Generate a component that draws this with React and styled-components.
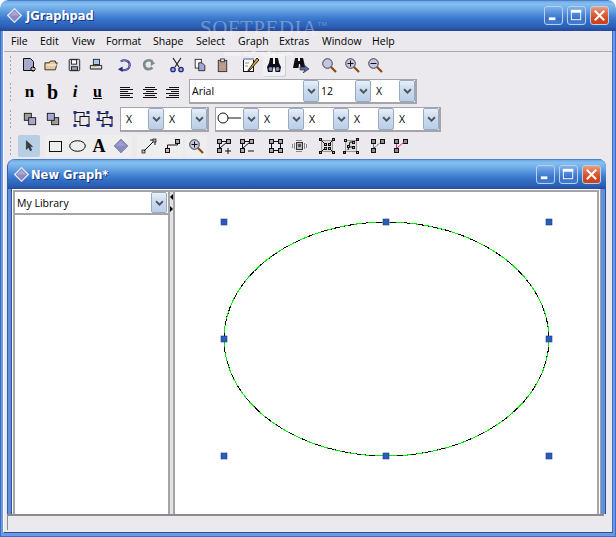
import React from "react";
import styled, { createGlobalStyle } from "styled-components";

const Global = createGlobalStyle`
  html, body { margin: 0; padding: 0; background: #fff; }
  body { width: 616px; height: 537px; overflow: hidden; font-family: "Open Sans", "Liberation Sans", sans-serif; }
  #root { width: 616px; height: 537px; }
`;

const BLUE = "linear-gradient(180deg,#2b55ad 0,#6fa9e6 1px,#86bfee 4px,#67a4e4 10px,#4683d4 16px,#3270c4 21px,#2b5eb4 27px,#2750a6 29px,#27499c 30px)";

const Shell = styled.div`
  position: relative; width: 616px; height: 537px; box-sizing: border-box;
  border-radius: 8px 8px 0 0; background: #fff; overflow: hidden;
  display: flex; flex-direction: column;
`;
const TitleBar = styled.div`
  flex: none; display: flex; align-items: center;
  height: ${p => p.$h}px; background: ${BLUE}; box-sizing: border-box;
  padding: ${p => p.$pad};
  margin: ${p => p.$bleed ? "0 -5px 0 -4px" : "0"};
  border-radius: 8px 8px 0 0;
`;
const TitleText = styled.span`
  font: bold ${p => p.$size}px "DejaVu Sans", sans-serif; color: #fff;
  text-shadow: 1px 1px 0 #16357f; margin-left: ${p => p.$ml}px; flex: 1;
`;
const WinBtn = styled.div`
  width: 19px; height: 19px; box-sizing: border-box; border: 1px solid #b9d0ef; border-radius: 3px;
  margin-left: 4px; display: flex; align-items: center; justify-content: center;
  background: ${p => p.$close
    ? "linear-gradient(180deg,#e9a083 0,#dd6a43 35%,#d44a22 65%,#cf3f18 100%)"
    : "linear-gradient(180deg,#7fb2ea 0,#4f8ad8 40%,#3a70c8 70%,#3f7fd2 100%)"};
`;
const Frame = styled.div`
  flex: 1; display: flex; flex-direction: column; min-height: 0;
  border-style: solid; border-color: #3b6bc6; border-width: 0 1px 1px 1px;
  background: #6b9ae0;
  padding: 0 2px 3px 2px;
`;
const Client = styled.div`
  flex: 1; min-height: 0; display: flex; flex-direction: column; background: #ebe9ed;
  border-left: 1px solid #fff; border-right: 1px solid #3b6bc6; border-bottom: 1px solid #2a4f9e;
`;
const MenuBar = styled.div`
  flex: none; height: 20px; display: flex; align-items: center; padding-left: 7px;
  border-bottom: 1px solid #a9a9ad;
`;
const MenuItem = styled.span`
  font-size: 10.5px; line-height: 12px; color: #000; width: ${p => p.$w}px; white-space: nowrap;
`;
const Toolbar = styled.div`
  flex: none; height: ${p => p.$h}px; display: flex; align-items: center; padding-left: 5px;
`;
const Grip = styled.div`
  width: 3px; height: ${p => p.$h}px; flex: none; margin-right: 6px;
  background-image: radial-gradient(circle, #a4a4ac 0.8px, transparent 1px);
  background-size: 3px 4px;
`;
const Group = styled.div`
  display: flex; align-items: center; margin-left: ${p => p.$ml || 0}px;
  background: ${p => p.$shade ? "#eeeeee" : "transparent"}; height: ${p => p.$shade ? "22px" : "auto"};
`;
const Tool = styled.div`
  width: ${p => p.$w || 22}px; height: 22px; flex: none; display: flex; align-items: center; justify-content: center;
  box-sizing: border-box; border-radius: 2px;
  background: ${p => p.$on ? "#b7cfe5" : p.$hover ? "#f1f0f2" : "transparent"};
  box-shadow: ${p => p.$hover ? "1px 1px 0 #cfcfd4" : "none"};
  margin-left: ${p => p.$ml || 0}px;
`;
const Glyph = styled.span`
  font: ${p => p.$italic ? "italic " : ""}bold ${p => p.$size}px/1 "Liberation Serif", serif; color: #000;
  text-decoration: ${p => p.$under ? "underline" : "none"};
`;
const ComboGroup = styled.div`
  display: flex; margin-left: ${p => p.$ml || 0}px; box-sizing: border-box;
  border: solid #a3a5ab; border-width: 1px 2px 2px 1px; background: #fff; height: 25px;
`;
const Combo = styled.div`
  width: ${p => p.$w}px; flex: none; background: #fff; display: flex; align-items: center;
  justify-content: space-between; box-sizing: border-box; margin-left: ${p => p.$ml || 0}px;
`;
const ComboText = styled.span`
  font-size: 10.5px; color: #000; padding-left: ${p => p.$pl || 5}px; white-space: nowrap;
`;
const Drop = styled.div`
  width: 16px; height: 100%; flex: none; box-sizing: border-box; border: 1px solid #98a9c2; border-radius: 2px;
  background: linear-gradient(180deg,#e9eff9 0,#d0deef 35%,#b9cfe7 100%);
  display: flex; align-items: center; justify-content: center;
`;
const Inner = styled.div`
  flex: 1; min-height: 0; display: flex; flex-direction: column; margin: 0 6px 0 3px;
`;
const InnerFrame = styled.div`
  flex: 1; min-height: 0; display: flex; flex-direction: column;
  background: #5f90da; border-left: 1px solid #2f5fb8; border-right: 1px solid #2a4f9e; padding: 0 4px;
  border-radius: 8px 8px 0 0;
`;
const InnerClient = styled.div`
  flex: 1; min-height: 0; display: flex; background: #fff; padding: 1px 1px 0 1px;
  border-left: 1px solid #2a4f9e; border-right: 1px solid #a5a5a8; margin-left: -1px;
`;
const Split = styled.div`
  flex: 1; min-height: 0; display: flex; border: 2px solid #a5a5a8; border-bottom: 0; background: #fff;
`;
const Library = styled.div`
  width: 153px; flex: none; display: flex; flex-direction: column; background: #fff;
`;
const LibraryCombo = styled.div`
  height: 23px; flex: none; display: flex; align-items: center; justify-content: space-between; box-sizing: border-box;
  border-bottom: 2px solid #a5a5a8; padding: 0 1px 0 0;
`;
const Divider = styled.div`
  position: relative; width: 7px; flex: none; box-sizing: border-box; background: #e2e1e6;
  border-left: 2px solid #a5a5a8; border-right: 2px solid #a5a5a8;
`;
const Arrow = styled.i`
  position: absolute; left: 0; top: ${p => p.$top}px; width: 0; height: 0;
  border-top: 3px solid transparent; border-bottom: 3px solid transparent;
  ${p => p.$left ? "border-right: 3px solid #000;" : "border-left: 3px solid #000;"}
`;
const Canvas = styled.div`
  flex: 1; position: relative; background: #fff; min-width: 0;
`;
const CanvasArt = styled.svg`
  position: absolute; left: 0; top: 0; width: 422px; height: 321px;
`;
const Status = styled.div`
  flex: none; height: 16px; box-sizing: border-box; margin: 0 8px 2px 3px; background: #ebe9ed;
  border-top: 2px solid #8c8c8f; border-left: 1px solid #8c8c8f;
`;
const Watermark = styled.div`
  position: absolute; left: 200px; top: 21px; white-space: nowrap;
  font: 21px/14px "Liberation Serif", serif; letter-spacing: 0.5px;
  color: rgba(255,255,255,.32); pointer-events: none;
`;
const WatermarkTM = styled.span`
  font: 6px/6px "Liberation Sans", sans-serif; vertical-align: top;
`;
const WatermarkSub = styled.div`
  position: absolute; left: 224px; top: 49px; font: 8px/9px "Liberation Sans", sans-serif;
  color: rgba(255,255,255,.8); pointer-events: none;
`;

const Svg = ({ children, s = 16, w, h, vb }) => (
  <svg width={w || s} height={h || s} viewBox={vb || "0 0 16 16"} fill="none">{children}</svg>
);
const Chevron = () => (
  <Svg w={9} h={6} vb="0 0 10 7"><path d="M1 1.5 5 5.5 9 1.5" stroke="#4d5666" strokeWidth="2.2" /></Svg>
);
const AppDiamond = () => (
  <Svg s={15} vb="0 0 15 15"><path d="M7.5.7 14.3 7.5 7.5 14.3.7 7.5Z" fill="#8b8bc0" stroke="#e8ebf8" strokeWidth="1.2" /><path d="M7.5 3 12 7.5H3Z" fill="#a9a9d4" /></Svg>
);
const Diamond = () => (
  <Svg><path d="M8 1 15 8 8 15 1 8Z" fill="#8a8ac2" stroke="#8f8fa8" /><path d="M8 3 13 8H3Z" fill="#9d9dd0" /></Svg>
);
const Min = () => <Svg s={15}><rect x="3" y="10" width="7" height="3" fill="#fff" /></Svg>;
const Max = () => <Svg s={15}><rect x="2.5" y="2.5" width="10" height="10" stroke="#fff" /><rect x="2" y="2" width="11" height="3" fill="#fff" /></Svg>;
const Close = () => <Svg s={15}><path d="M3 3 13 13M13 3 3 13" stroke="#fff" strokeWidth="2.2" /></Svg>;

const Lens = ({ children }) => (
  <Svg>
    <path d="M10 10 15 15" stroke="#8a4a12" strokeWidth="2.2" />
    <circle cx="6.5" cy="6.5" r="4.8" fill="#c6c6dc" stroke="#3b3b50" />
    {children}
  </Svg>
);
const Binoculars = () => (
  <>
    <path d="M4 1h3v6h2V1h3l1 5 2 4-1 5H9.5L8.5 10h-1l-1 5H2l-1-5 2-4Z" fill="#0d0d14" />
    <circle cx="4.5" cy="12" r="2" fill="#7f8fc0" />
    <circle cx="11.5" cy="12" r="2" fill="#7f8fc0" />
  </>
);
const Node = ({ x, y, s = 4, f = "#a8a8a8" }) => <rect x={x + .5} y={y + .5} width={s} height={s} fill={f} stroke="#111" />;
const Handle = ({ x, y }) => <rect x={x} y={y} width="3" height="3" fill="#1f2f8c" />;

const I = {
  new: <Svg><path d="M2.5 1.5h7l3 3v9h-10Z" fill="#a9a9cc" stroke="#111" /><path d="M12 9v6M9 12h6M10 10l4 4M14 10l-4 4" stroke="#111" /><path d="M12 11v2M11 12h2" stroke="#fff" /></Svg>,
  open: <Svg w={15} h={14} vb="0 0 17 16"><path d="M1 5.5h5l1-2h6v2h2l-2 8H1Z" fill="#e8c99a" stroke="#222" /><path d="M3 8h12" stroke="#fff" /></Svg>,
  save: <Svg s={14}><rect x="2.5" y="1.5" width="12" height="13" rx="1" fill="#dcdce6" stroke="#111" /><rect x="5" y="2" width="6" height="5" fill="#fff" stroke="#111" /><rect x="5" y="10" width="7" height="4" fill="#9c9cc0" stroke="#111" /></Svg>,
  print: <Svg s={14}><rect x="5" y="1.5" width="7" height="6" fill="#a8c8e8" stroke="#222" /><path d="M1.5 8.5h13v4h-13Z" fill="#dedee6" stroke="#111" /><path d="M1.5 12.5h13v1h-13Z" fill="#777" /><rect x="4" y="9" width="5" height="1" fill="#e8a040" /></Svg>,
  undo: <Svg s={15}><path d="M4 3.5C8 1 14 3 13.5 8S7 14 4 12" stroke="#2a2a7c" strokeWidth="2.2" /><path d="M4 3.5C8 1 14 3 13.5 8S7 14 4 12" stroke="#9aa0dc" strokeWidth=".9" /><path d="M1 12 6 9v6Z" fill="#2a2a7c" /></Svg>,
  redo: <Svg s={14}><path d="M12 4C8 1 2 3 2.5 8S8 14 12 11" stroke="#7f8a8a" strokeWidth="3" /><path d="M15 6 10 2v7Z" fill="#7f8a8a" /></Svg>,
  cut: <Svg><path d="M4 1 10 10M12 1 6 10" stroke="#222" strokeWidth="1.2" /><circle cx="4" cy="12.5" r="2.2" fill="#aab" stroke="#1f2a8c" strokeWidth="1.3" /><circle cx="12" cy="12.5" r="2.2" fill="#aab" stroke="#1f2a8c" strokeWidth="1.3" /></Svg>,
  copy: <Svg s={14}><rect x="2.5" y="1.5" width="7" height="10" fill="#fff" stroke="#222" /><path d="M6.5 5.5h4l3 3v6h-7Z" fill="#9fa6d6" stroke="#222" /></Svg>,
  paste: <Svg s={15}><rect x="3.5" y="2.5" width="9" height="12" fill="#bb9b90" stroke="#333" /><rect x="6" y="1" width="4" height="3" fill="#eee" stroke="#333" /></Svg>,
  edit: <Svg w={18} h={16} vb="0 0 18 16"><rect x="1.5" y="1.5" width="10" height="13" fill="#fff" stroke="#111" /><rect x="1" y="1" width="11" height="2" fill="#a0a0c8" /><path d="M15 1 7 12l-1 2 2-1 9-10Z" fill="#d8a838" stroke="#222" /><path d="M3 6h4M3 9h3" stroke="#888" /></Svg>,
  find: <Svg><Binoculars /></Svg>,
  replace: <Svg w={18} h={16} vb="0 0 18 16"><path d="M3 1h3v3h2V1h3l1 4 1 5H8.5L8 7H7l-.5 4H1l1-5Z" fill="#0d0d14" /><path d="M8 10h5l-2-3 6 5-6 4 2-3H8Z" fill="#5d68ad" stroke="#222" strokeWidth=".6" /></Svg>,
  zoom: <Lens />,
  zoomin: <Lens><path d="M3.5 6.5h6M6.5 3.5v6" stroke="#111" /></Lens>,
  zoomout: <Lens><path d="M3.5 6.5h6" stroke="#111" /></Lens>,
  left: <Svg><path d="M2 3.5h10M2 5.5h13M2 7.5h8M2 9.5h13M2 11.5h10M2 13.5h13" stroke="#111" /></Svg>,
  center: <Svg><path d="M3 3.5h10M1 5.5h14M4 7.5h8M1 9.5h14M3 11.5h10M1 13.5h14" stroke="#111" /></Svg>,
  right: <Svg><path d="M4 3.5h10M1 5.5h13M6 7.5h8M1 9.5h13M4 11.5h10M1 13.5h13" stroke="#111" /></Svg>,
  front: <Svg s={14}><rect x="1.5" y="1.5" width="8" height="8" fill="#9d9d9d" stroke="#111" /><rect x="6.5" y="6.5" width="8" height="8" fill="#a8a8cc" stroke="#111" /></Svg>,
  back: <Svg s={14}><rect x="6.5" y="6.5" width="8" height="8" fill="#9d9d9d" stroke="#111" /><rect x="1.5" y="1.5" width="8" height="8" fill="#a8a8cc" stroke="#111" /></Svg>,
  group: <Svg w={17}><rect x="1.5" y="1.5" width="9" height="9" stroke="#111" /><rect x="6.5" y="5.5" width="9" height="9" fill="#ebe9ed" stroke="#111" /><Handle x={0} y={0} /><Handle x={13} y={0} /><Handle x={0} y={13} /><Handle x={13} y={13} /></Svg>,
  ungroup: <Svg w={17}><rect x="2.5" y="2.5" width="8" height="7" stroke="#111" /><rect x="6.5" y="6.5" width="9" height="7" fill="#ebe9ed" stroke="#111" /><Handle x={1} y={0} /><Handle x={9} y={0} /><Handle x={0} y={7} /><Handle x={13} y={5} /><Handle x={5} y={13} /><Handle x={13} y={13} /></Svg>,
  arrow: <Svg s={14}><path d="M5 2v10l2.5-2.5 2 4 1.6-.8-2-4H12Z" fill="#3a3f4a" stroke="#111" strokeWidth=".6" /></Svg>,
  rect: <Svg w={13} h={11} vb="0 0 13 11"><rect x=".5" y=".5" width="12" height="10" stroke="#111" /></Svg>,
  ellipse: <Svg w={17} h={12} vb="0 0 17 12"><ellipse cx="8.5" cy="6" rx="7.8" ry="5.3" stroke="#111" /></Svg>,
  connect: <Svg><rect x="1" y="12" width="3" height="3" fill="#d8b0b8" stroke="#111" strokeWidth=".7" /><path d="M3 13 13 3M9 2h5v5" stroke="#111" /><rect x="12" y="1" width="3" height="3" fill="#aaa" stroke="#111" strokeWidth=".7" /></Svg>,
  route: <Svg><Node x={1} y={10} f="#d8b0b8" /><path d="M3.5 10V7h10V4" stroke="#111" /><Node x={11} y={1} /></Svg>,
  gplus: <Svg><Node x={1} y={1} /><Node x={10} y={1} /><Node x={1} y={10} /><path d="M4 10 11 4" stroke="#111" /><path d="M3.5 6v4M6 3.5h4" stroke="#111" /><path d="M9 13h6M12 10v6" stroke="#111" /></Svg>,
  gminus: <Svg><Node x={1} y={1} /><Node x={10} y={1} /><Node x={1} y={10} /><path d="M4 10 11 4M3.5 6v4M6 3.5h4M9 13h6" stroke="#111" /></Svg>,
  square: <Svg><Node x={1} y={1} /><Node x={10} y={1} /><Node x={1} y={10} /><Node x={10} y={10} /><path d="M3.5 6v4M12.5 6v4M6 3.5h4M6 12.5h4" stroke="#111" /></Svg>,
  embed: <Svg><rect x="5.5" y="4.5" width="6" height="7" fill="#bbb" stroke="#333" /><rect x="7" y="6" width="3" height="3" fill="#555" /><path d="M3.5 5v6M13.5 5v6M1.5 6v4M15.5 6v4M5 2.5h6M5 13.5h6" stroke="#888" /></Svg>,
  layout1: <Svg><rect x="2.5" y="2.5" width="11" height="11" fill="#dcdcdc" stroke="#999" /><path d="M2 2 6 6M14 2 10 6M2 14 6 10M14 14 10 10" stroke="#111" /><Node x={0} y={0} s={2} /><Node x={13} y={0} s={2} /><Node x={0} y={13} s={2} /><Node x={13} y={13} s={2} /><Node x={5} y={5} s={2} /><Node x={9} y={5} s={2} /><Node x={5} y={9} s={2} /><Node x={9} y={9} s={2} /></Svg>,
  layout2: <Svg><rect x="2.5" y="2.5" width="11" height="11" fill="#dcdcdc" stroke="#999" /><Node x={0} y={13} s={2} f="#d8306a" /><Node x={13} y={0} s={2} f="#d8306a" /><Node x={1} y={1} s={2} /><Node x={13} y={13} s={2} /><path d="M5 12 7 4h4M7 9h4" stroke="#111" /><Node x={4} y={7} s={2} /><Node x={9} y={3} s={2} /><Node x={9} y={8} s={2} /></Svg>,
  tree1: <Svg><Node x={1} y={1} f="#8c8c8c" /><Node x={10} y={1} f="#8c8c8c" /><Node x={1} y={10} f="#8c8c8c" /><path d="M4 10 11 4" stroke="#111" strokeDasharray="1 1" /><path d="M3.5 6v4" stroke="#777" /></Svg>,
  tree2: <Svg><Node x={1} y={1} f="#8c8c8c" /><Node x={10} y={1} f="#8c8c8c" /><Node x={1} y={10} f="#8c8c8c" /><path d="M4 10 11 4M3.5 6v4" stroke="#d83070" /></Svg>,
};

const menus = [["File", 29], ["Edit", 32], ["View", 34], ["Format", 47], ["Shape", 43], ["Select", 42], ["Graph", 41], ["Extras", 43], ["Window", 50], ["Help", 30]];
const handles = [[49, 30], [211, 30], [374, 30], [49, 147], [374, 147], [49, 264], [211, 264], [374, 264]];

const ComboBox = ({ w, text, ml, pl }) => (
  <Combo $w={w} $ml={ml}>
    <ComboText $pl={pl}>{text}</ComboText>
    <Drop><Chevron /></Drop>
  </Combo>
);

export default function App() {
  return (
    <Shell>
      <Global />
      <TitleBar $h={31} $pad="0 7px 0 7px">
        <AppDiamond />
        <TitleText $size={11.5} $ml={4}>JGraphpad</TitleText>
        <WinBtn><Min /></WinBtn>
        <WinBtn><Max /></WinBtn>
        <WinBtn $close><Close /></WinBtn>
      </TitleBar>
      <Frame>
        <Client>
          <MenuBar>
            {menus.map(([m, w]) => <MenuItem key={m} $w={w}>{m}</MenuItem>)}
          </MenuBar>
          <Toolbar $h={26}>
            <Grip $h={20} />
            <Group>
              <Tool>{I.new}</Tool><Tool>{I.open}</Tool><Tool $w={23}>{I.save}</Tool><Tool>{I.print}</Tool>
            </Group>
            <Group $ml={5}><Tool $w={24}>{I.undo}</Tool><Tool $w={26}>{I.redo}</Tool></Group>
            <Group $ml={3}><Tool $w={24}>{I.cut}</Tool><Tool $w={22}>{I.copy}</Tool><Tool $w={22}>{I.paste}</Tool></Group>
            <Group $ml={6}><Tool $w={24}>{I.edit}</Tool><Tool $hover>{I.find}</Tool><Tool $w={30} $ml={1}>{I.replace}</Tool></Group>
            <Group $ml={1}><Tool $w={23}>{I.zoom}</Tool><Tool $w={23}>{I.zoomin}</Tool><Tool $w={23}>{I.zoomout}</Tool></Group>
          </Toolbar>
          <Toolbar $h={27}>
            <Grip $h={20} />
            <Group>
              <Tool $w={23}><Glyph $size={17}>n</Glyph></Tool>
              <Tool $w={23}><Glyph $size={20}>b</Glyph></Tool>
              <Tool $w={22}><Glyph $size={17} $italic>i</Glyph></Tool>
              <Tool $w={23}><Glyph $size={16} $under>u</Glyph></Tool>
            </Group>
            <Group $ml={5}><Tool $w={24}>{I.left}</Tool><Tool $w={23}>{I.center}</Tool><Tool $w={23}>{I.right}</Tool></Group>
            <ComboGroup $ml={5}>
              <ComboBox w={129} text="Arial" pl={2} />
              <ComboBox w={52} text="12" pl={2} />
              <ComboBox w={44} text="X" />
            </ComboGroup>
          </Toolbar>
          <Toolbar $h={28}>
            <Grip $h={20} />
            <Group>
              <Tool $w={23}>{I.front}</Tool><Tool $w={23}>{I.back}</Tool>
              <Tool $w={24} $ml={5}>{I.group}</Tool><Tool $w={22}>{I.ungroup}</Tool>
            </Group>
            <ComboGroup $ml={5}>
              <ComboBox w={43} text="X" />
              <ComboBox w={43} text="X" />
            </ComboGroup>
            <ComboGroup $ml={6}>
              <Combo $w={43}>
                <Svg w={25} h={14} vb="0 0 25 14"><circle cx="7" cy="6" r="5" stroke="#111" /><path d="M12 6h13" stroke="#111" /></Svg>
                <Drop><Chevron /></Drop>
              </Combo>
              <ComboBox w={45} text="X" />
              <ComboBox w={45} text="X" />
              <ComboBox w={45} text="X" />
              <ComboBox w={45} text="X" />
            </ComboGroup>
          </Toolbar>
          <Toolbar $h={26}>
            <Grip $h={20} />
            <Group><Tool $on>{I.arrow}</Tool></Group>
            <Group $ml={5} $shade>
              <Tool $w={21}>{I.rect}</Tool><Tool $w={22}>{I.ellipse}</Tool>
              <Tool $w={22}><Glyph $size={18}>A</Glyph></Tool><Tool $w={22}><Diamond /></Tool>
            </Group>
            <Group $ml={5} $shade><Tool $w={23}>{I.connect}</Tool><Tool $w={23}>{I.route}</Tool></Group>
            <Group $ml={2} $shade><Tool $w={22}>{I.zoomin}</Tool></Group>
            <Group $ml={5}>
              <Tool $w={23}>{I.gplus}</Tool><Tool $w={23}>{I.gminus}</Tool>
              <Tool $w={25} $ml={5}>{I.square}</Tool><Tool $w={22}>{I.embed}</Tool>
              <Tool $w={24} $ml={5}>{I.layout1}</Tool><Tool $w={23}>{I.layout2}</Tool>
              <Tool $w={23} $ml={4}>{I.tree1}</Tool><Tool $w={23}>{I.tree2}</Tool>
            </Group>
          </Toolbar>
          <Inner>
            <InnerFrame>
              <TitleBar $h={30} $bleed $pad="1px 5px 0 6px">
                <AppDiamond />
                <TitleText $size={11.5} $ml={2}>New Graph*</TitleText>
                <WinBtn><Min /></WinBtn>
                <WinBtn><Max /></WinBtn>
                <WinBtn $close><Close /></WinBtn>
              </TitleBar>
              <InnerClient>
                <Split>
                  <Library>
                    <LibraryCombo>
                      <ComboText $pl={2}>My Library</ComboText>
                      <Drop><Chevron /></Drop>
                    </LibraryCombo>
                  </Library>
                  <Divider>
                    <Arrow $left $top={2} />
                    <Arrow $top={14} />
                  </Divider>
                  <Canvas>
                    <CanvasArt viewBox="0 0 422 321">
                      <ellipse cx="211.5" cy="147" rx="162.5" ry="117" fill="none" stroke="#000" strokeWidth="1" shapeRendering="crispEdges" />
                      <ellipse cx="211.5" cy="147" rx="162.5" ry="117" fill="none" stroke="#00e800" strokeWidth="1" strokeDasharray="8 6" shapeRendering="crispEdges" />
                      {handles.map(([x, y]) => (
                        <rect key={x + "-" + y} x={x - 3} y={y - 3} width="6" height="6" fill="#2a5cb8" stroke="#1d3f8c" strokeWidth=".6" />
                      ))}
                    </CanvasArt>
                  </Canvas>
                </Split>
              </InnerClient>
            </InnerFrame>
          </Inner>
          <Status />
        </Client>
      </Frame>
      <Watermark>SOFTPEDIA<WatermarkTM>TM</WatermarkTM></Watermark>
      <WatermarkSub>www.softpedia.com</WatermarkSub>
    </Shell>
  );
}
